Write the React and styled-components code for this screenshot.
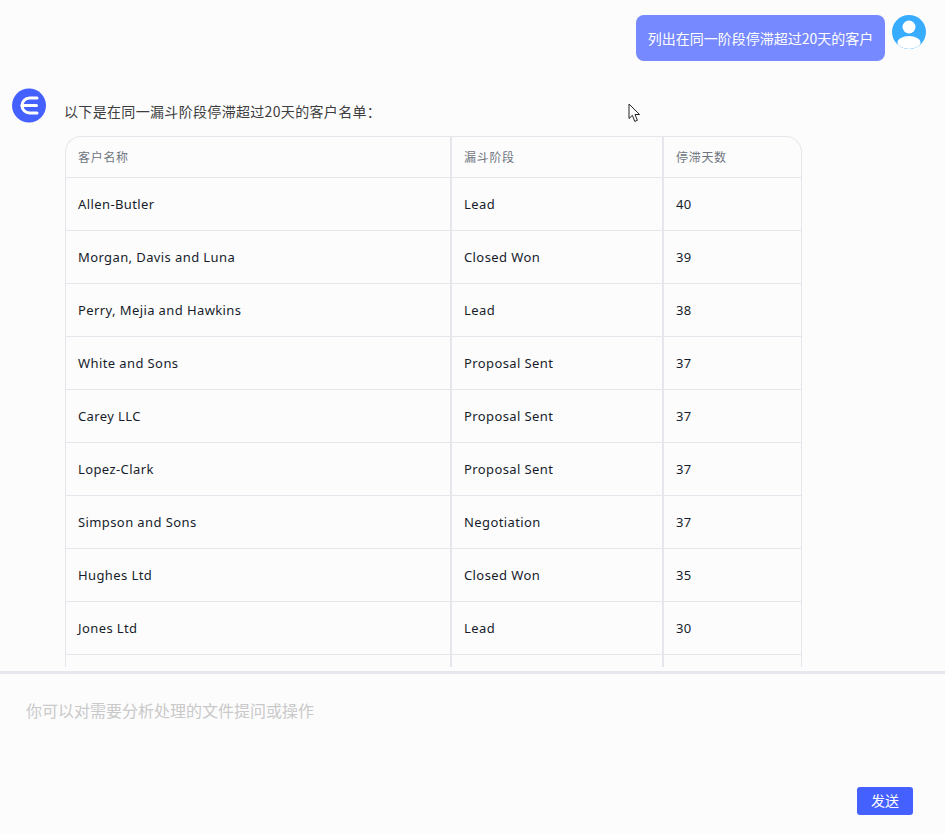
import React from "react";
import styled, {createGlobalStyle} from "styled-components";

const GlobalStyle = createGlobalStyle`
  html, body {
    margin: 0;
    padding: 0;
    background: #fcfcfd;
  }
  body {
    font-family: "Noto Sans", "Noto Sans CJK SC", sans-serif;
  }
`;

const Page = styled.div`
  position: relative;
  display: flex;
  flex-direction: column;
  width: 945px;
  height: 834px;
  overflow: hidden;
  background: #fcfcfd;
`;

const Chat = styled.div`
  height: 667px;
  margin-bottom: 4px;
  overflow: hidden;
  flex-shrink: 0;
`;

const UserRow = styled.div`
  display: flex;
  justify-content: flex-end;
  gap: 7px;
  padding: 15px 19px 0 0;
`;

const Bubble = styled.div`
  box-sizing: border-box;
  width: 249px;
  height: 46px;
  display: flex;
  align-items: center;
  justify-content: center;
  border-radius: 8px;
  background: #7689ff;
  color: #fff;
  font-family: "Noto Sans CJK SC", sans-serif;
  font-size: 14px;
  white-space: nowrap;
  padding-bottom: 1px;
`;

const AnswerRow = styled.div`
  display: flex;
  gap: 19px;
  padding: 27px 0 0 12px;
`;

const LogoWrap = styled.div`
  width: 34px;
  height: 35px;
  flex-shrink: 0;
`;

const Answer = styled.div`
  width: 737px;
`;

const Intro = styled.p`
  margin: 0 0 0 -1px;
  height: 48px;
  padding-top: 13px;
  box-sizing: border-box;
  font-family: "Noto Sans CJK SC", sans-serif;
  font-size: 14px;
  line-height: 20px;
  letter-spacing: 0.33px;
  color: #3d3d3d;
`;

const TableBox = styled.div`
  box-sizing: border-box;
  width: 737px;
  border: 1px solid #e6e7ec;
  border-bottom: 0;
  border-radius: 16px 16px 0 0;
`;

const Row = styled.div`
  display: grid;
  grid-template-columns: 386px 212px 1fr;
  height: ${p => (p.$head ? "41px" : "53px")};
  box-sizing: border-box;
  border-bottom: 1px solid #e6e7ec;
`;

const Cell = styled.div`
  display: flex;
  align-items: center;
  padding-left: 12px;
  padding-bottom: 1px;
  border-right: ${p => (p.$last ? "0" : "2px solid #e6e7ec")};
  font-size: ${p => (p.$head ? "12px" : "13px")};
  color: ${p => (p.$head ? "#6f7680" : "#171c2b")};
  letter-spacing: ${p => (p.$head ? "0.7px" : "0.4px")};
  white-space: nowrap;
  box-sizing: border-box;
`;

const Composer = styled.div`
  flex: 1;
  position: relative;
  border-top: 3px solid #e6e7ec;
`;

const Placeholder = styled.div`
  padding: 24px 0 0 26px;
  font-family: "Noto Sans CJK SC", sans-serif;
  font-size: 16px;
  line-height: 24px;
  color: #c9c9c9;
`;

const SendButton = styled.button`
  position: absolute;
  right: 32px;
  bottom: 19px;
  width: 56px;
  height: 28px;
  padding: 0 0 2px;
  border: 0;
  border-radius: 3px;
  background: #4460ff;
  color: #fff;
  font-family: "Noto Sans CJK SC", sans-serif;
  font-size: 14px;
`;

const Cursor = styled.svg`
  position: absolute;
  left: 628px;
  top: 103px;
`;

const rows = [
    ["Allen-Butler", "Lead", "40"],
    ["Morgan, Davis and Luna", "Closed Won", "39"],
    ["Perry, Mejia and Hawkins", "Lead", "38"],
    ["White and Sons", "Proposal Sent", "37"],
    ["Carey LLC", "Proposal Sent", "37"],
    ["Lopez-Clark", "Proposal Sent", "37"],
    ["Simpson and Sons", "Negotiation", "37"],
    ["Hughes Ltd", "Closed Won", "35"],
    ["Jones Ltd", "Lead", "30"],
    ["", "", ""],
];

function UserAvatar() {
    return (
        <svg width="34" height="34" viewBox="0 0 34 34" style={{flexShrink: 0}}>
            <defs>
                <clipPath id="avatarClip"><circle cx="17" cy="17" r="17"/></clipPath>
            </defs>
            <circle cx="17" cy="17" r="17" fill="#38acff"/>
            <g clipPath="url(#avatarClip)">
                <circle cx="17" cy="12" r="6.5" fill="#fff"/>
                <ellipse cx="17" cy="27.5" rx="11.5" ry="6.5" fill="#fff"/>
            </g>
        </svg>
    );
}

function Logo() {
    return (
        <svg width="34" height="35" viewBox="0 0 34 35">
            <circle cx="17" cy="17.5" r="17" fill="#4460ff"/>
            <path d="M25 10 H17.5 a7.5 7.5 0 0 0 0 15 H25" fill="none" stroke="#fff" strokeWidth="3" strokeLinecap="round"/>
            <path d="M10 17.5 H24.5" fill="none" stroke="#fff" strokeWidth="3" strokeLinecap="round"/>
        </svg>
    );
}

function App() {
    return (
        <Page>
            <GlobalStyle/>
            <Chat>
                <UserRow>
                    <Bubble>列出在同一阶段停滞超过20天的客户</Bubble>
                    <UserAvatar/>
                </UserRow>
                <AnswerRow>
                    <LogoWrap><Logo/></LogoWrap>
                    <Answer>
                        <Intro>以下是在同一漏斗阶段停滞超过20天的客户名单：</Intro>
                        <TableBox>
                            <Row $head>
                                <Cell $head>客户名称</Cell>
                                <Cell $head>漏斗阶段</Cell>
                                <Cell $head $last>停滞天数</Cell>
                            </Row>
                            {rows.map((row, i) => (
                                <Row key={i}>
                                    <Cell>{row[0]}</Cell>
                                    <Cell>{row[1]}</Cell>
                                    <Cell $last>{row[2]}</Cell>
                                </Row>
                            ))}
                        </TableBox>
                    </Answer>
                </AnswerRow>
            </Chat>
            <Composer>
                <Placeholder>你可以对需要分析处理的文件提问或操作</Placeholder>
                <SendButton>发送</SendButton>
            </Composer>
            <Cursor width="13" height="20" viewBox="0 0 13 20">
                <path d="M1 1 V15.5 L4.4 12.4 L6.8 18.4 L9.4 17.3 L7 11.5 H11.6 Z" fill="#fff" stroke="#222" strokeWidth="1"/>
            </Cursor>
        </Page>
    );
}

export default App;
